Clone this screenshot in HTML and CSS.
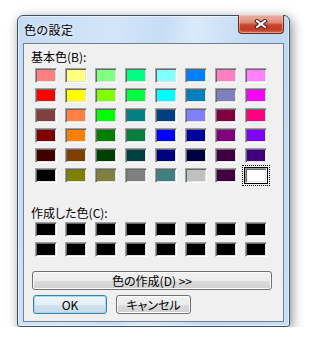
FILE: index.html
```html
<!DOCTYPE html>
<html lang="ja">
<head>
<meta charset="utf-8">
<title>色の設定</title>
<link rel="stylesheet" href="styles.css">
</head>
<body>
<div class="window">
  <div class="titlebar">
    <span class="title">色の設定</span>
    <div class="close">
      <svg width="14" height="10" viewBox="0 0 14 10">
        <path d="M3 2 L11 8 M11 2 L3 8" stroke="#3b2420" stroke-width="4" stroke-linecap="square" fill="none"/>
        <path d="M3 2 L11 8 M11 2 L3 8" stroke="#ffffff" stroke-width="2" stroke-linecap="square" fill="none"/>
      </svg>
    </div>
  </div>
  <div class="client">
    <div class="label">基本色(B):</div>
    <div class="grid basic">
      <div class="sw" style="background:#ff8080"></div>
      <div class="sw" style="background:#ffff80"></div>
      <div class="sw" style="background:#80ff80"></div>
      <div class="sw" style="background:#00ff80"></div>
      <div class="sw" style="background:#80ffff"></div>
      <div class="sw" style="background:#0080ff"></div>
      <div class="sw" style="background:#ff80c0"></div>
      <div class="sw" style="background:#ff80ff"></div>

      <div class="sw" style="background:#ff0000"></div>
      <div class="sw" style="background:#ffff00"></div>
      <div class="sw" style="background:#80ff00"></div>
      <div class="sw" style="background:#00ff40"></div>
      <div class="sw" style="background:#00ffff"></div>
      <div class="sw" style="background:#0080c0"></div>
      <div class="sw" style="background:#8080c0"></div>
      <div class="sw" style="background:#ff00ff"></div>

      <div class="sw" style="background:#804040"></div>
      <div class="sw" style="background:#ff8040"></div>
      <div class="sw" style="background:#00ff00"></div>
      <div class="sw" style="background:#008080"></div>
      <div class="sw" style="background:#004080"></div>
      <div class="sw" style="background:#8080ff"></div>
      <div class="sw" style="background:#800040"></div>
      <div class="sw" style="background:#ff0080"></div>

      <div class="sw" style="background:#800000"></div>
      <div class="sw" style="background:#ff8000"></div>
      <div class="sw" style="background:#008000"></div>
      <div class="sw" style="background:#008040"></div>
      <div class="sw" style="background:#0000ff"></div>
      <div class="sw" style="background:#0000a0"></div>
      <div class="sw" style="background:#800080"></div>
      <div class="sw" style="background:#8000ff"></div>

      <div class="sw" style="background:#400000"></div>
      <div class="sw" style="background:#804000"></div>
      <div class="sw" style="background:#004000"></div>
      <div class="sw" style="background:#004040"></div>
      <div class="sw" style="background:#000080"></div>
      <div class="sw" style="background:#000040"></div>
      <div class="sw" style="background:#400040"></div>
      <div class="sw" style="background:#400080"></div>

      <div class="sw" style="background:#000000"></div>
      <div class="sw" style="background:#808000"></div>
      <div class="sw" style="background:#808040"></div>
      <div class="sw" style="background:#808080"></div>
      <div class="sw" style="background:#408080"></div>
      <div class="sw" style="background:#c0c0c0"></div>
      <div class="sw" style="background:#400040"></div>
      <div class="sw selected" style="background:#ffffff"></div>
    </div>
    <div class="label custom-label">作成した色(C):</div>
    <div class="grid custom">
      <div class="sw black"></div><div class="sw black"></div><div class="sw black"></div><div class="sw black"></div>
      <div class="sw black"></div><div class="sw black"></div><div class="sw black"></div><div class="sw black"></div>
      <div class="sw black"></div><div class="sw black"></div><div class="sw black"></div><div class="sw black"></div>
      <div class="sw black"></div><div class="sw black"></div><div class="sw black"></div><div class="sw black"></div>
    </div>
    <button class="btn wide">色の作成(D) &gt;&gt;</button>
    <div class="btnrow">
      <button class="btn ok">OK</button>
      <button class="btn cancel">キャンセル</button>
    </div>
  </div>
</div>
</body>
</html>
```
FILE: styles.css
```css
html, body {
  margin: 0;
  padding: 0;
  background: #ffffff;
}
body {
  font-family: "Noto Sans CJK JP", "Noto Sans", sans-serif;
  font-size: 12px;
  color: #000;
}
.window {
  position: relative;
  box-sizing: border-box;
  width: 273px;
  height: 312px;
  margin: 15px 0 0 17px;
  border: 1px solid #3d4f63;
  border-radius: 6px 6px 3px 3px;
  background: linear-gradient(100deg, #c3daf3 0%, #d3e5f8 30%, #c6ddf5 45%, #dbeafa 55%, #bfd7f1 75%, #c8def4 100%);
  box-shadow: 2px 3px 12px rgba(0, 0, 0, 0.45), inset 0 0 0 1px rgba(255, 255, 255, 0.55);
  padding: 0 5px 4px 5px;
}
.titlebar {
  position: relative;
  height: 27px;
  line-height: 27px;
  padding-left: 1px;
}
.title {
  font-size: 12px;
  letter-spacing: 0.3px;
  text-shadow: 0 0 6px rgba(255, 255, 255, 0.9);
}
.close {
  position: absolute;
  top: -1px;
  right: 0;
  box-sizing: border-box;
  width: 46px;
  height: 19px;
  border: 1px solid #6b2a20;
  border-top: none;
  border-radius: 0 0 4px 4px;
  background: linear-gradient(#eab0a2 0%, #df8f7d 40%, #c9452d 55%, #c23c26 80%, #d36a4a 100%);
  box-shadow: inset 0 0 0 1px rgba(255, 220, 210, 0.45);
  display: flex;
  align-items: center;
  justify-content: center;
}
.client {
  box-sizing: border-box;
  height: 279px;
  border: 1px solid #6f8193;
  background: #f0f0f0;
  font-feature-settings: "palt";
}
.label {
  line-height: 14px;
  margin: 6px 0 0 7px;
}
.custom-label {
  margin-top: 23px;
}
.grid {
  display: grid;
  grid-template-columns: repeat(8, 22px);
  grid-auto-rows: 15px;
  column-gap: 8px;
  row-gap: 5px;
  margin-left: 11px;
}
.basic {
  margin-top: 4px;
}
.custom {
  margin-top: 2px;
}
.sw {
  position: relative;
  box-sizing: border-box;
  width: 22px;
  height: 15px;
  border: 1px solid;
  border-color: #a0a0a0 #ffffff #ffffff #a0a0a0;
  box-shadow: inset 1px 1px 0 #696969, inset -1px -1px 0 #e3e3e3;
}
.sw.black {
  background: #000;
}
.sw.selected::before {
  content: "";
  position: absolute;
  left: -2px;
  top: -2px;
  right: -2px;
  bottom: -2px;
  border: 1px solid #000;
}
.sw.selected::after {
  content: "";
  position: absolute;
  left: -4px;
  top: -4px;
  right: -4px;
  bottom: -4px;
  border: 1px dotted #000;
}
.btn {
  box-sizing: border-box;
  display: block;
  height: 19px;
  padding: 0;
  font-family: "Noto Sans CJK JP", "Noto Sans", sans-serif;
  font-size: 12px;
  line-height: 17px;
  color: #000;
  border: 1px solid #707070;
  border-radius: 3px;
  background: linear-gradient(#f2f2f2 0%, #ebebeb 50%, #dddddd 51%, #cfcfcf 100%);
  box-shadow: inset 0 0 0 1px #fcfcfc;
  font-feature-settings: "palt";
}
.wide {
  width: 240px;
  margin: 14px 0 0 8px;
}
.btnrow {
  display: flex;
  gap: 9px;
  margin: 5px 0 0 9px;
}
.ok {
  width: 74px;
  border-color: #3c7fb1;
  box-shadow: inset 0 0 0 1px #9fdcf6;
  background: linear-gradient(#eef6fb 0%, #e3eef6 50%, #d3e3ee 51%, #c6d9e6 100%);
}
.cancel {
  width: 75px;
}
```
